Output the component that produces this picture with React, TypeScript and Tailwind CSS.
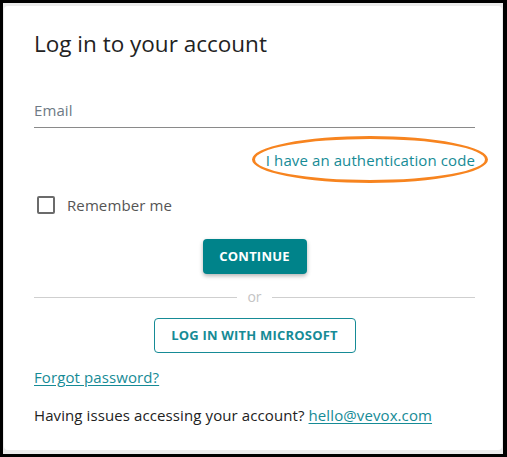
import React from "react";

export default function App() {
  return (
    <div className="w-[507px] h-[457px] bg-black pt-[3px] pl-[3px] pr-[4px] pb-[3px]" style={{ fontFamily: "'Open Sans', sans-serif" }}>
      <div className="w-full h-full bg-[#ebebeb] pt-[3px] pl-[1px] pr-[1px] pb-[4px]">
        <div className="relative w-full h-full bg-white rounded-[4px] pl-[30px] pr-[27px] pt-[23px]">
          <h1 className="text-[22.5px] leading-[30px] text-[#222] font-normal">Log in to your account</h1>
          <div className="mt-[39px] border-b border-[#8a8a8a] pb-[5px]">
            <span className="text-[15px] leading-[20px] tracking-[0.1px] text-[#6e7a85]">Email</span>
          </div>
          <div className="mt-[22px] flex justify-end">
            <span className="relative text-[15px] leading-[20px] tracking-[0.1px] text-[#168b96]">
              I have an authentication code
              <span className="absolute left-[-14px] right-[-13px] top-[-14px] bottom-[-13px] rounded-[50%] border-[3px] border-[#f7841f]" />
            </span>
          </div>
          <label className="mt-[25px] flex items-center gap-[12px] pl-[3px]">
            <span className="w-[18px] h-[18px] border-2 border-[#6b6b6b] rounded-[2px]" />
            <span className="text-[15px] leading-[20px] tracking-[0.1px] text-[#555]">Remember me</span>
          </label>
          <div className="mt-[24px] flex justify-center">
            <button className="w-[104px] h-[35px] rounded-[4px] bg-[#00838a] text-white text-[13px] font-bold tracking-[0.2px] shadow-[0_2px_4px_rgba(0,0,0,0.3)]">CONTINUE</button>
          </div>
          <div className="mt-[15px] flex items-center gap-[10px]">
            <div className="flex-1 h-px bg-[#cfcfcf]" />
            <span className="text-[14px] leading-[16px] text-[#c4c4c4]">or</span>
            <div className="flex-1 h-px bg-[#cfcfcf]" />
          </div>
          <div className="mt-[13px] flex justify-center">
            <button className="w-[202px] h-[35px] rounded-[4px] border border-[#168b96] text-[#168b96] text-[13px] font-bold tracking-[0.2px]">LOG IN WITH MICROSOFT</button>
          </div>
          <div className="mt-[12px]">
            <a className="text-[15px] leading-[20px] tracking-[0.1px] text-[#168b96] underline underline-offset-2">Forgot password?</a>
          </div>
          <p className="mt-[16px] text-[15px] leading-[20px] tracking-[0.1px] text-[#222]">
            Having issues accessing your account?{" "}
            <a className="text-[#168b96] underline underline-offset-2">hello@vevox.com</a>
          </p>
        </div>
      </div>
    </div>
  );
}
